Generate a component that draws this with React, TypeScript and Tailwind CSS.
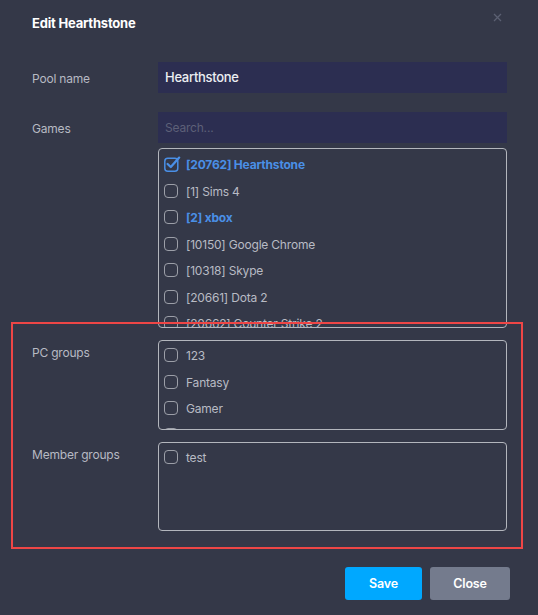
import React from "react";

type Item = { label: string; checked?: boolean; highlight?: boolean };

const games: Item[] = [
  { label: "[20762] Hearthstone", checked: true, highlight: true },
  { label: "[1] Sims 4" },
  { label: "[2] xbox", highlight: true },
  { label: "[10150] Google Chrome" },
  { label: "[10318] Skype" },
  { label: "[20661] Dota 2" },
  { label: "[20662] Counter Strike 2" },
];

const pcGroups: Item[] = [{ label: "123" }, { label: "Fantasy" }, { label: "Gamer" }, { label: "VIP" }];
const memberGroups: Item[] = [{ label: "test" }];

function CheckedBox() {
  return (
    <svg width="17" height="17" viewBox="0 0 17 17" className="-mt-[3px] -mr-[3px] shrink-0">
      <rect x="0.8" y="3.2" width="13" height="13" rx="3" fill="none" stroke="#4a8fe6" strokeWidth="1.5" />
      <path d="M3.6 9 L6.8 12 L15.2 2.6" fill="none" stroke="#4a8fe6" strokeWidth="2.3" strokeLinecap="round" strokeLinejoin="round" />
    </svg>
  );
}

function Row({ item }: { item: Item }) {
  return (
    <div className="flex h-[26.5px] items-center gap-[8px] pl-[5px]">
      {item.checked ? (
        <CheckedBox />
      ) : (
        <span className="-mt-[2px] h-[14px] w-[14px] shrink-0 rounded-[4px] border border-[#9c9fa8]" />
      )}
      <span
        className={
          item.highlight
            ? "whitespace-nowrap text-[12px] font-bold tracking-[-0.2px] text-[#4a8fe6]"
            : "whitespace-nowrap text-[12px] tracking-[-0.2px] text-[#b8bbc4]"
        }
      >
        {item.label}
      </span>
    </div>
  );
}

function CheckList({ items, height, pad }: { items: Item[]; height: string; pad: string }) {
  return (
    <div className={`${height} ${pad} overflow-hidden rounded-[4px] border border-[#b3b6bd]`}>
      {items.map((it) => (
        <Row key={it.label} item={it} />
      ))}
    </div>
  );
}

function Field({ label, children, labelTop }: { label: string; children: React.ReactNode; labelTop?: boolean }) {
  return (
    <div className={labelTop ? "flex items-start" : "flex items-center"}>
      <div
        className={
          labelTop
            ? "w-[126px] shrink-0 pt-[4px] text-[12px] tracking-[-0.2px] text-[#b7bac3]"
            : "w-[126px] shrink-0 pt-[3px] text-[12px] tracking-[-0.2px] text-[#b7bac3]"
        }
      >
        {label}
      </div>
      <div className="flex-1">{children}</div>
    </div>
  );
}

export default function App() {
  return (
    <div
      className="relative min-h-screen w-full bg-[#343848] pl-[32px] pr-[31px]"
      style={{ fontFamily: "Inter, 'Noto Sans', sans-serif" }}
    >
      <div className="flex h-[46px] items-center justify-between pt-[1px]">
        <h1 className="text-[13px] font-bold tracking-[-0.2px] text-white">Edit Hearthstone</h1>
        <svg width="9" height="9" viewBox="0 0 9 9" className="-mt-[12px] mr-[5px]">
          <path d="M1 1 L8 8 M8 1 L1 8" stroke="#5b6072" strokeWidth="1.3" />
        </svg>
      </div>

      <div className="mt-[16px]">
        <Field label="Pool name">
          <div className="flex h-[31px] items-center bg-[#2c2e51] px-[7px] text-[13px] font-medium tracking-[-0.3px] text-[#eceef3]">
            Hearthstone
          </div>
        </Field>
      </div>

      <div className="mt-[19px]">
        <Field label="Games">
          <div className="flex h-[31px] items-center bg-[#2c2e51] px-[7px] text-[12px] tracking-[-0.2px] text-[#5d6078]">
            Search...
          </div>
        </Field>
        <div className="mt-[5px] flex">
          <div className="w-[126px] shrink-0" />
          <div className="flex-1">
            <CheckList items={games} height="h-[180px]" pad="pt-[3px]" />
          </div>
        </div>
      </div>

      <div className="mt-[12px]">
        <Field label="PC groups" labelTop>
          <CheckList items={pcGroups} height="h-[90px]" pad="pt-[2px]" />
        </Field>
      </div>

      <div className="mt-[12px]">
        <Field label="Member groups" labelTop>
          <CheckList items={memberGroups} height="h-[89px]" pad="pt-[2px]" />
        </Field>
      </div>

      <div className="mt-[36px] flex justify-end gap-[8px]">
        <button className="h-[33px] w-[77px] rounded-[3px] bg-[#00a8ff] pt-[2px] text-[12.5px] font-semibold tracking-[-0.2px] text-white">
          Save
        </button>
        <button className="-mr-[3px] h-[33px] w-[80px] rounded-[3px] bg-[#747b8d] pt-[2px] text-[12.5px] font-semibold tracking-[-0.2px] text-white">
          Close
        </button>
      </div>

      <div className="pointer-events-none absolute left-[11px] top-[322px] h-[227px] w-[512px] border-2 border-[#ee4646]" />
    </div>
  );
}
